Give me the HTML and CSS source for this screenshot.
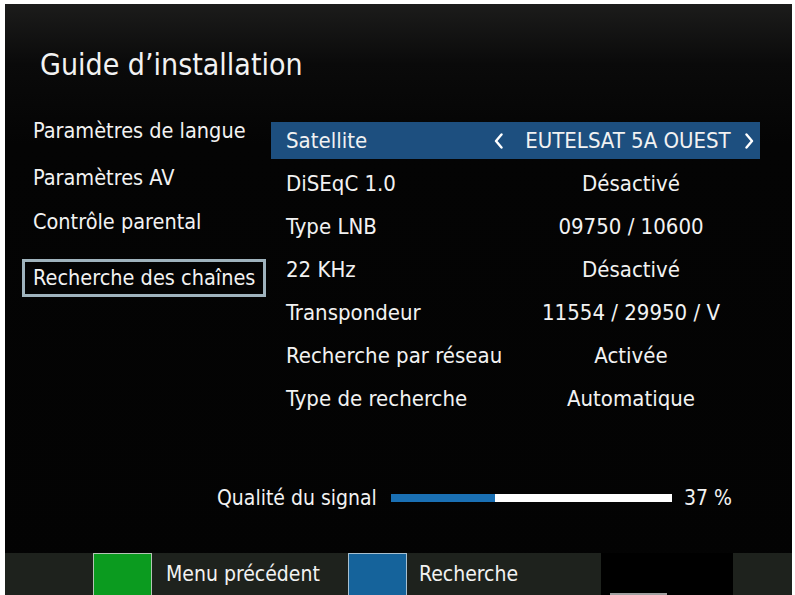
FILE: index.html
```html
<!DOCTYPE html>
<html lang="fr">
<head>
<meta charset="utf-8">
<title>Guide d'installation</title>
<link rel="stylesheet" href="styles.css">
</head>
<body>
<div class="screen">
  <h1 class="title">Guide d’installation</h1>
  <div class="main">
    <ul class="menu">
      <li class="menu-item">Paramètres de langue</li>
      <li class="menu-item">Paramètres AV</li>
      <li class="menu-item">Contrôle parental</li>
      <li class="menu-item selected">Recherche des chaînes</li>
    </ul>
    <div class="settings">
      <div class="row active">
        <span class="label">Satellite</span>
        <span class="value">
          <svg class="chev" viewBox="0 0 9 16" width="9" height="16"><path d="M7.5 1.5 L2 8 L7.5 14.5" fill="none" stroke="#ffffff" stroke-width="2.4" stroke-linecap="round" stroke-linejoin="round"/></svg>
          <span class="val-text">EUTELSAT 5A OUEST</span>
          <svg class="chev" viewBox="0 0 9 16" width="9" height="16"><path d="M1.5 1.5 L7 8 L1.5 14.5" fill="none" stroke="#ffffff" stroke-width="2.4" stroke-linecap="round" stroke-linejoin="round"/></svg>
        </span>
      </div>
      <div class="row"><span class="label">DiSEqC 1.0</span><span class="value">Désactivé</span></div>
      <div class="row"><span class="label">Type LNB</span><span class="value">09750 / 10600</span></div>
      <div class="row"><span class="label">22 KHz</span><span class="value">Désactivé</span></div>
      <div class="row"><span class="label">Transpondeur</span><span class="value">11554 / 29950 / V</span></div>
      <div class="row"><span class="label">Recherche par réseau</span><span class="value">Activée</span></div>
      <div class="row"><span class="label">Type de recherche</span><span class="value">Automatique</span></div>
    </div>
  </div>
  <div class="signal">
    <span class="signal-label">Qualité du signal</span>
    <div class="bar"><div class="bar-fill" style="width:37%"></div></div>
    <span class="signal-value">37 %</span>
  </div>
  <div class="footer">
    <span class="key key-green"></span>
    <span class="key-label">Menu précédent</span>
    <span class="key key-blue"></span>
    <span class="key-label key-label-2">Recherche</span>
    <span class="black-box"><span class="black-line"></span></span>
  </div>
</div>
</body>
</html>
```
FILE: styles.css
```css
html, body {
  margin: 0;
  padding: 0;
  background: #ffffff;
  overflow: hidden;
}
body {
  width: 795px;
  height: 595px;
}
.screen {
  margin: 4px 3px 0 5px;
  height: 591px;
  background: linear-gradient(180deg, #1c1c1b 0px, #0a0a0a 60px, #040404 140px, #030303 100%);
  display: flex;
  flex-direction: column;
  font-family: "DejaVu Sans Condensed", "DejaVu Sans", sans-serif;
  color: #f2f2f2;
  white-space: nowrap;
  overflow: hidden;
}
.title {
  margin: 0;
  padding: 39px 0 0 35px;
  height: 51px;
  font-size: 30px;
  font-weight: normal;
  line-height: 44px;
}
.main {
  display: flex;
  padding-top: 28px;
}
.menu {
  list-style: none;
  display: flex;
  flex-direction: column;
  align-items: flex-start;
  margin: -6px 0 0 0;
  padding: 0 0 0 17px;
  width: 249px;
}
.menu-item {
  font-size: 21.5px;
  line-height: 30px;
  height: 30px;
  padding: 0 0 0 11px;
}
.menu-item:nth-child(1) {
  margin-bottom: 17px;
}
.menu-item:nth-child(2) {
  margin-bottom: 14px;
}
.menu-item:nth-child(3) {
  margin-bottom: 22px;
}
.menu-item.selected {
  border: 3px solid #9fb3bd;
  height: 32px;
  line-height: 32px;
  width: 230px;
  padding-left: 8px;
}
.settings {
  width: 489px;
}
.row {
  display: flex;
  align-items: center;
  height: 37px;
  margin-bottom: 6px;
  font-size: 22px;
  padding-left: 15px;
}
.row.active {
  background: #1d4f7f;
}
.label {
  width: 230px;
}
.value {
  flex: 1;
  text-align: center;
  padding-right: 14px;
}
.row.active .label {
  width: 208px;
}
.row.active .value {
  display: flex;
  align-items: center;
  padding-right: 6px;
}
.chev {
  display: block;
  flex: none;
}
.val-text {
  flex: 1;
  text-align: center;
  padding-left: 8px;
}
.signal {
  display: flex;
  align-items: center;
  margin-top: 60px;
  padding-left: 212px;
  font-size: 21px;
  height: 30px;
}
.signal-label {
  width: 174px;
}
.bar {
  width: 281px;
  height: 8px;
  background: #ffffff;
  margin-right: 12px;
}
.bar-fill {
  height: 100%;
  background: #1a70b4;
}
.footer {
  margin-top: auto;
  height: 42px;
  flex: none;
  background: #1e221d;
  display: flex;
  align-items: flex-start;
  font-size: 21px;
}
.key {
  display: block;
  flex: none;
  width: 59px;
  height: 42px;
  border: 1px solid #b4c4b4;
  border-bottom: none;
  box-sizing: border-box;
}
.key-green {
  margin-left: 88px;
  background: #0b9b1f;
}
.key-blue {
  background: #15639b;
  border-color: #a8c0d0;
}
.key-label {
  line-height: 42px;
  padding-left: 14px;
  width: 182px;
  flex: none;
}
.key-label-2 {
  width: 182px;
  padding-left: 12px;
}
.black-box {
  flex: none;
  width: 132px;
  height: 42px;
  background: #000000;
  position: relative;
}
.black-line {
  position: absolute;
  left: 9px;
  bottom: 0;
  width: 57px;
  height: 2px;
  background: #a0a0a0;
}
```
